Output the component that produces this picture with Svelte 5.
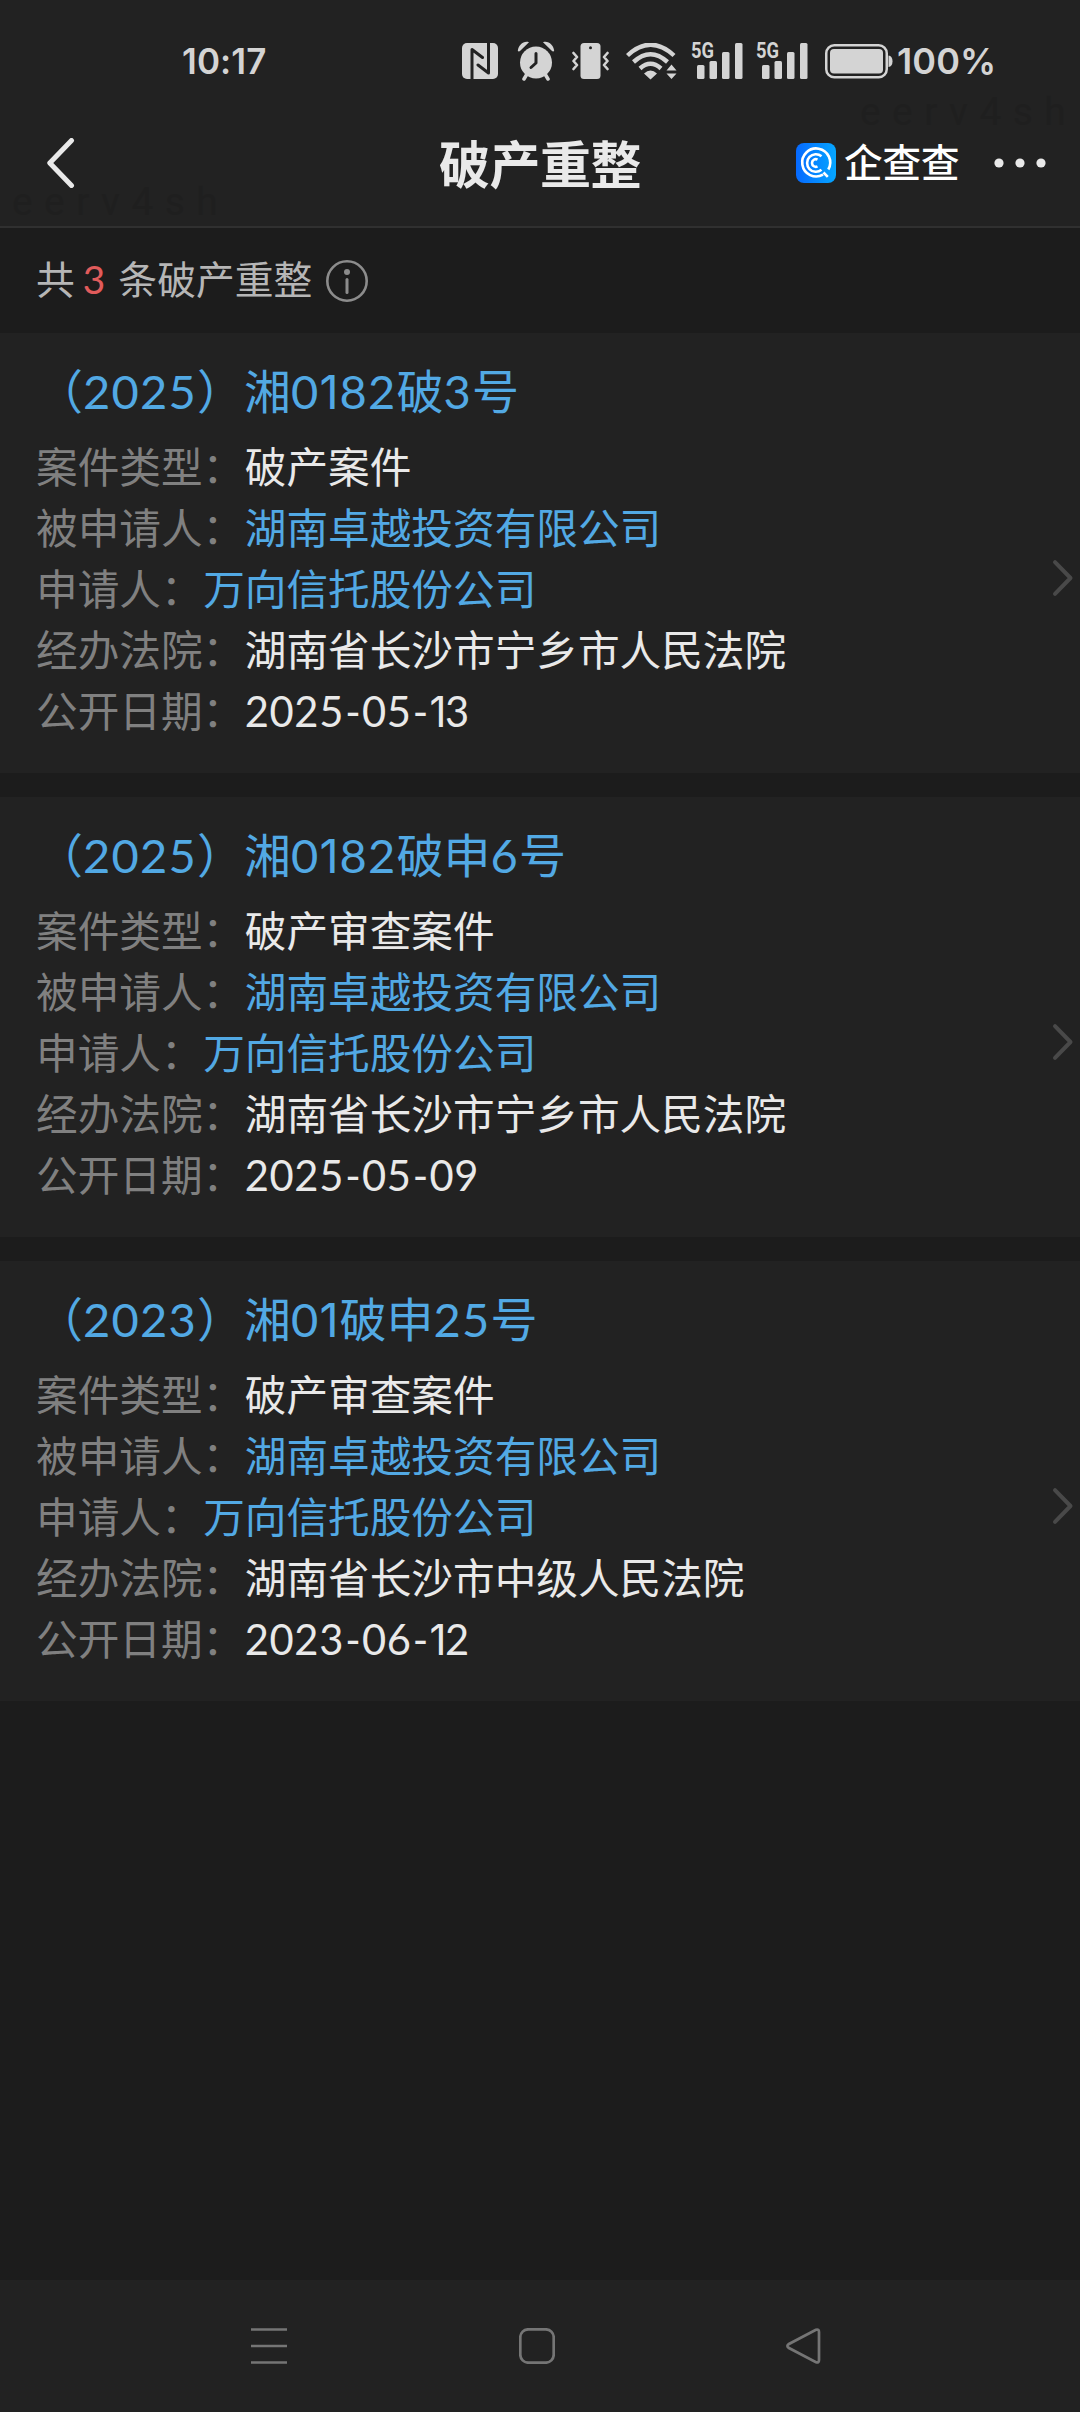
<script lang="ts">
  type Field = { label: string; value: string; link?: boolean };
  type Case = { no: string; fields: Field[] };

  function makeCase(no: string, type: string, court: string, date: string): Case {
    return {
      no,
      fields: [
        { label: '案件类型：', value: type },
        { label: '被申请人：', value: '湖南卓越投资有限公司', link: true },
        { label: '申请人：', value: '万向信托股份公司', link: true },
        { label: '经办法院：', value: court },
        { label: '公开日期：', value: date },
      ],
    };
  }

  const cases: Case[] = [
    makeCase('（2025）湘0182破3号', '破产案件', '湖南省长沙市宁乡市人民法院', '2025-05-13'),
    makeCase('（2025）湘0182破申6号', '破产审查案件', '湖南省长沙市宁乡市人民法院', '2025-05-09'),
    makeCase('（2023）湘01破申25号', '破产审查案件', '湖南省长沙市中级人民法院', '2023-06-12'),
  ];

  // digits are spaced proportionally, with a narrow 1 and a wide hyphen
  const split = (text: string) => text.split(/([\d-])/).filter(Boolean);
  const isDigit = (part: string) => /^[02-9]$/.test(part);
</script>

{#snippet spaced(text: string)}
  {#each split(text) as part}<span class:digit={isDigit(part)} class:one={part === '1'} class:dash={part === '-'}>{part}</span>{/each}
{/snippet}

{#snippet signal()}
  <svg class="signal" width="52" height="54" viewBox="0 -8 52 54">
    <text x="0" y="16" textLength="23" lengthAdjust="spacingAndGlyphs">5G</text>
    <rect x="6" y="23" width="7.5" height="14" rx="1.5" />
    <rect x="18.500" y="19" width="7.5" height="18" rx="1.5" />
    <rect x="31" y="10" width="7.5" height="27" rx="1.5" />
    <rect x="44" y="1" width="7.5" height="36" rx="1.5" />
  </svg>
{/snippet}

<div class="screen">
  <header>
    <div class="status">
      <span class="time">10:17</span>
      <div class="icons">
        <svg class="nfc" width="36" height="36" viewBox="0 0 36 36">
          <rect width="36" height="36" rx="5" />
          <path class="cut" d="M10 36V6.500L20.500 14.500M26.500 0V30L16 22" />
        </svg>
        <svg class="alarm" width="38" height="40" viewBox="0 0 38 40">
          <circle cx="19" cy="21.500" r="16" />
          <path class="legs" d="M10 33l-3 5M28 33l3 5" />
          <path d="M.8 10C1.500 4 6.500 -.5 12 1.200L3.500 9.500Q2 11 .8 10ZM37.200 10C36.500 4 31.500 -.5 26 1.200L34.500 9.500Q36 11 37.200 10Z" />
          <path class="cut" d="M19 12.500V22l-5 4.500" />
        </svg>
        <svg class="vibrate" width="37" height="36" viewBox="0 0 37 36">
          <rect x="8.500" width="20" height="36" rx="3.500" />
          <circle class="hole" cx="18.500" cy="4.700" r="1.500" />
          <path class="wave" d="M1.500 10l3.500 4-3.500 4 3.500 4-3.500 4M35.500 10l-3.500 4 3.500 4-3.500 4 3.500 4" />
        </svg>
        <svg class="wifi" width="52" height="37" viewBox="0 0 52 37">
          <path class="arc" d="M1.500 12.500Q24.500-9 48 12.500M7.500 19Q24.500 3.500 41.500 19M14 25.500Q24.500 16 35 25.500" />
          <path d="M18 30.500Q24.500 24.500 31 30.500L24.500 36.500ZM40.500 27.500h10L45.500 21.500ZM40.500 30.500h10L45.500 36Z" />
        </svg>
        {@render signal()}
        {@render signal()}
        <svg class="battery" width="68" height="35" viewBox="0 0 68 35">
          <rect class="shell" x="1.250" y="1.250" width="60.500" height="32" rx="8" />
          <rect x="5" y="5" width="53" height="24.500" rx="4" />
          <path d="M63.500 11.500q4 .5 4 5.800t-4 5.800z" />
        </svg>
        <span class="percent">100%</span>
      </div>
    </div>

    <div class="titlebar">
      <svg class="back" width="28" height="50" viewBox="0 0 28 50">
        <path d="M24.500 2.500L2.800 25 24.500 47.500" />
      </svg>
      <h1>破产重整</h1>
      <div class="brand">
        <svg width="40" height="40" viewBox="0 0 40 40">
          <defs>
            <linearGradient id="brand-bg" x1="0" y1="0" x2="1" y2="0">
              <stop offset="0" stop-color="#0669ff" />
              <stop offset="1" stop-color="#05a6ff" />
            </linearGradient>
          </defs>
          <rect width="40" height="40" rx="8" fill="url(#brand-bg)" />
          <g class="lens">
            <path d="M27 31.700A14 14 0 1 1 32.300 26.500M27.500 29.500l4.300 4.300" />
            <path d="M25.500 13.200A8.800 8.800 0 1 0 25.500 26.800" />
            <path d="M21.500 16.600A3.800 3.800 0 1 0 21.500 23.400" />
          </g>
        </svg>
        <span>企查查</span>
      </div>
      <svg class="more" width="52" height="10" viewBox="0 0 52 10">
        <circle cx="5" cy="5" r="4.600" />
        <circle cx="26" cy="5" r="4.600" />
        <circle cx="47" cy="5" r="4.600" />
      </svg>
    </div>
    <span class="mark left">eerv4sh</span>
    <span class="mark right">eerv4sh</span>
  </header>

  <div class="summary">
    <span>共</span>
    <span class="count">3</span>
    <span>条破产重整</span>
    <svg width="42" height="42" viewBox="0 0 42 42">
      <circle class="ring" cx="21" cy="21" r="19.700" />
      <circle cx="21" cy="12" r="3" />
      <path d="M21 19.500v13" />
    </svg>
  </div>

  <main>
    {#each cases as item (item.no)}
      <article>
        <div class="info">
          <h2>{@render spaced(item.no)}</h2>
          {#each item.fields as field}
            <div class="row">
              <span class="label">{field.label}</span>
              <span class="value" class:link={field.link}>{@render spaced(field.value)}</span>
            </div>
          {/each}
        </div>
        <svg class="chevron" width="22" height="38" viewBox="0 0 22 38">
          <path d="M3 3.200L18.500 19 3 34.800" />
        </svg>
      </article>
    {/each}
  </main>

  <nav>
    <svg width="36" height="36" viewBox="0 0 36 36">
      <path d="M0 1.500h36M0 18h36M0 34.500h36" />
    </svg>
    <svg width="36" height="36" viewBox="0 0 36 36">
      <rect x="1.300" y="1.300" width="33.400" height="33.400" rx="8" />
    </svg>
    <svg width="36" height="36" viewBox="1 0 36 36">
      <path d="M31 1.800L3.500 16.200Q1.300 18 3.500 19.800L31 34.200Q34 35 34 32V4Q34 1 31 1.800Z" />
    </svg>
  </nav>
</div>

<style>
  :global(body) {
    background: #1c1c1c;
  }
  .screen {
    display: flex;
    flex-direction: column;
    width: 1080px;
    height: 2412px;
    overflow: hidden;
    background: #1c1c1c;
    color: #e9e9e9;
    font-family: Lato, 'Noto Sans CJK SC', sans-serif;
  }
  svg {
    display: block;
    flex: none;
  }

  header {
    position: relative;
    flex: none;
    box-sizing: border-box;
    height: 228px;
    background: #222;
    border-bottom: 2px solid #303030;
  }
  .status {
    display: flex;
    align-items: center;
    justify-content: space-between;
    height: 100px;
    padding: 22px 84px 0 182px;
    box-sizing: border-box;
    color: #d4d4d4;
    fill: currentColor;
    font-family: Inter, sans-serif;
    font-size: 36px;
    font-weight: 600;
  }
  .time {
    font-size: 35px;
    letter-spacing: 0.1px;
  }
  .icons {
    display: flex;
    align-items: center;
  }
  .cut {
    fill: none;
    stroke: #222;
    stroke-width: 3;
    stroke-linecap: round;
    stroke-linejoin: round;
  }
  .legs {
    stroke: currentColor;
    stroke-width: 3.5;
    stroke-linecap: round;
  }
  .hole {
    fill: #222;
  }
  .wave {
    fill: none;
    stroke: currentColor;
    stroke-width: 2.6;
    stroke-linecap: round;
    stroke-linejoin: round;
  }
  .arc {
    fill: none;
    stroke: currentColor;
    stroke-width: 4.4;
  }
  .alarm {
    margin-left: 19px;
  }
  .vibrate {
    margin-left: 17px;
  }
  .wifi {
    margin-left: 17px;
  }
  .signal {
    margin-left: 13px;
  }
  .signal text {
    font-family: Roboto, sans-serif;
    font-size: 22px;
    font-weight: 700;
  }
  .battery {
    margin-left: 17px;
  }
  .shell {
    fill: none;
    stroke: currentColor;
    stroke-width: 2.5;
  }
  .percent {
    width: 99px;
    margin-left: 4px;
    letter-spacing: 0.1px;
    white-space: nowrap;
  }

  .titlebar {
    display: grid;
    grid-template-columns: 392px 298px 1fr auto;
    align-items: center;
    height: 126px;
    padding: 0 34px 0 47px;
  }
  .back path {
    fill: none;
    stroke: #e9e9e9;
    stroke-width: 5;
    stroke-linecap: round;
    stroke-linejoin: round;
  }
  h1 {
    margin: 3px 0 0;
    width: 210px;
    font-size: 51px;
    font-weight: 700;
    line-height: 70px;
    letter-spacing: -0.5px;
    white-space: nowrap;
  }
  .brand {
    display: flex;
    align-items: center;
    gap: 8px;
    margin-left: 59px;
    color: #fff;
    font-size: 38.5px;
    font-weight: 500;
    line-height: 40px;
    white-space: nowrap;
  }
  .brand span {
    padding-bottom: 3px;
  }
  .lens {
    fill: none;
    stroke: #fff;
    stroke-width: 2.6;
  }
  .more {
    fill: #e9e9e9;
  }
  .mark {
    position: absolute;
    color: #1f1f1f;
    font-family: Roboto, sans-serif;
    font-size: 39px;
    line-height: 48px;
    letter-spacing: 11.4px;
    white-space: nowrap;
  }
  .mark.left {
    left: 12px;
    top: 178px;
  }
  .mark.right {
    left: 860px;
    top: 88px;
  }

  .summary {
    display: flex;
    align-items: center;
    flex: none;
    height: 105px;
    padding-left: 36px;
    color: #b6b6b6;
    font-size: 38.8px;
    line-height: 60px;
  }
  .summary span {
    padding-bottom: 3px;
  }
  .summary .count {
    margin: 0 13px 0 8px;
    color: #e15b5b;
  }
  .summary svg {
    margin-left: 14px;
    fill: #8c8c8c;
    stroke: #8c8c8c;
  }
  .summary circle {
    stroke: none;
  }
  .summary .ring {
    fill: none;
    stroke: #8c8c8c;
    stroke-width: 2.6;
  }
  .summary path {
    stroke-width: 3;
    stroke-linecap: round;
  }

  main {
    display: flex;
    flex: 1;
    flex-direction: column;
    gap: 24px;
  }
  article {
    display: flex;
    align-items: center;
    justify-content: space-between;
    box-sizing: border-box;
    height: 440px;
    padding: 0 6px 4px 36px;
    background: #222;
  }
  h2 {
    margin: 0 0 16px;
    height: 60px;
    color: #52a9e4;
    font-size: 47px;
    font-weight: 400;
    line-height: 60px;
    white-space: nowrap;
  }
  .row {
    display: flex;
    height: 61px;
    font-size: 41.65px;
    line-height: 61px;
    white-space: nowrap;
  }
  .label {
    margin-right: 0.6px;
    color: #808080;
  }
  .link {
    color: #52a9e4;
  }
  .digit {
    letter-spacing: 0.015em;
  }
  .one {
    font-family: Inter, sans-serif;
    line-height: 1;
    letter-spacing: -0.03em;
  }
  .dash {
    margin-left: 0.03em;
    letter-spacing: 0.03em;
  }
  h2 .digit {
    letter-spacing: 0.026em;
  }
  h2 .one {
    letter-spacing: 0.02em;
  }
  .chevron {
    margin-top: 54px;
  }
  .chevron path {
    fill: none;
    stroke: #494949;
    stroke-width: 4;
    stroke-linecap: round;
    stroke-linejoin: round;
  }

  nav {
    display: flex;
    flex: none;
    justify-content: space-between;
    box-sizing: border-box;
    height: 132px;
    padding: 48px 258px 0 251px;
    background: #222;
    fill: none;
    stroke: #757575;
    stroke-width: 2.7;
  }
</style>
